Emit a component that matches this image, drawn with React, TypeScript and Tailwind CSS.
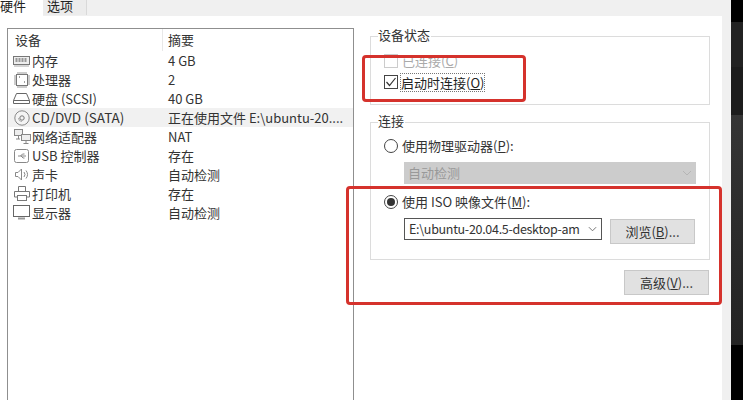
import type { ReactNode } from 'react'

const font = `"Noto Sans CJK SC", "Noto Sans", sans-serif`

const MemoryIcon = () => (
	<svg width="18" height="12" viewBox="0 0 18 12" fill="none" stroke="#777" strokeWidth="1">
		<rect x="0.5" y="1.5" width="16" height="8" fill="#eee" />
		<path d="M2.5 4h12M2.5 6h12" stroke="#999" strokeWidth="2" strokeDasharray="2 1" />
		<path d="M1 11h15" stroke="#aaa" />
	</svg>
)

const CpuIcon = () => (
	<svg width="16" height="16" viewBox="0 0 16 16" fill="none" stroke="#777" strokeWidth="1">
		<rect x="2.5" y="2.5" width="11" height="11" />
		<path d="M4 0v2M6 0v2M8 0v2M10 0v2M12 0v2M4 14v2M6 14v2M8 14v2M10 14v2M12 14v2M0 4h2M0 6h2M0 8h2M0 10h2M0 12h2M14 4h2M14 6h2M14 8h2M14 10h2M14 12h2" stroke="#999" />
		<path d="M5 5h1M10 10h1" stroke="#444" />
	</svg>
)

const DiskIcon = () => (
	<svg width="18" height="13" viewBox="0 0 18 13" fill="none" stroke="#666" strokeWidth="1">
		<path d="M3.5 1.5h10l3 7v3h-16v-3zM0.5 8.5h16" />
	</svg>
)

const CdIcon = () => (
	<svg width="16" height="16" viewBox="0 0 16 16" fill="none" stroke="#888" strokeWidth="1">
		<circle cx="8" cy="8" r="7.2" fill="#f4f4f4" />
		<circle cx="8" cy="8" r="2.2" stroke="#777" />
		<path d="M4.5 8a3.5 3.5 0 0 0 3.5 3.5" stroke="#aaa" />
	</svg>
)

const NetworkIcon = () => (
	<svg width="17" height="15" viewBox="0 0 17 15" fill="none" stroke="#888" strokeWidth="1">
		<rect x="0.5" y="0.5" width="8" height="6" fill="#eee" />
		<rect x="7.5" y="5.5" width="9" height="6" fill="#eee" />
		<path d="M4.5 7v3M2 10h4M12 12v2M9.5 14.5h5" />
	</svg>
)

const UsbIcon = () => (
	<svg width="16" height="16" viewBox="0 0 16 16" fill="none" stroke="#888" strokeWidth="1">
		<rect x="0.5" y="1.5" width="14" height="13" rx="2" />
		<path d="M4 8h8M6.5 8l2-2h2M7 8l2 2h1.5" />
	</svg>
)

const SpeakerIcon = () => (
	<svg width="15" height="13" viewBox="0 0 15 13" fill="none" stroke="#888" strokeWidth="1">
		<path d="M0.5 4.5h2.5l3.5-3.5v11l-3.5-3.5h-2.5z" />
		<path d="M9 4a4 4 0 0 1 0 5M11 2.5a6.5 6.5 0 0 1 0 8" />
	</svg>
)

const PrinterIcon = () => (
	<svg width="16" height="15" viewBox="0 0 16 15" fill="none" stroke="#777" strokeWidth="1">
		<path d="M4.5 5V0.5h7V5M3.5 11h-3V5.5h15V11h-3" />
		<rect x="3.5" y="9.5" width="9" height="5" />
	</svg>
)

const MonitorIcon = () => (
	<svg width="18" height="15" viewBox="0 0 18 15" fill="none" stroke="#666" strokeWidth="1">
		<rect x="0.5" y="0.5" width="16" height="11" />
		<path d="M5 13.5h7" strokeWidth="2" stroke="#999" />
	</svg>
)

const devices: { icon: ReactNode; name: string; summary: string; selected?: boolean }[] = [
	{ icon: <MemoryIcon />, name: '内存', summary: '4 GB' },
	{ icon: <CpuIcon />, name: '处理器', summary: '2' },
	{ icon: <DiskIcon />, name: '硬盘 (SCSI)', summary: '40 GB' },
	{ icon: <CdIcon />, name: 'CD/DVD (SATA)', summary: '正在使用文件 E:\\ubuntu-20....', selected: true },
	{ icon: <NetworkIcon />, name: '网络适配器', summary: 'NAT' },
	{ icon: <UsbIcon />, name: 'USB 控制器', summary: '存在' },
	{ icon: <SpeakerIcon />, name: '声卡', summary: '自动检测' },
	{ icon: <PrinterIcon />, name: '打印机', summary: '存在' },
	{ icon: <MonitorIcon />, name: '显示器', summary: '自动检测' },
]

const Radio = ({ checked }: { checked?: boolean }) => (
	<span className="flex size-[14px] shrink-0 items-center justify-center rounded-full border border-[#444] bg-white">
		{checked && <span className="size-[8px] rounded-full bg-[#333]" />}
	</span>
)

const Group = ({ title, className, children }: { title: string; className: string; children: ReactNode }) => (
	<div className={`relative border border-[#dcdcdc] ${className}`}>
		<span className="absolute -top-[11px] left-[7px] bg-white pr-[1px] text-[13px] leading-[18px] text-[#333]">
			{title}
		</span>
		{children}
	</div>
)

export default function App() {
	return (
		<div className="flex h-[400px] w-[743px] overflow-hidden bg-black" style={{ fontFamily: font }}>
			<div className="flex w-[731px] shrink-0 flex-col bg-[#f0f0f0]">
				<div className="flex h-[16px] shrink-0 text-[13px] leading-[12px] text-[#222]">
					<div className="h-[16px] w-[43px] overflow-hidden bg-white">硬件</div>
					<div className="h-[15px] w-[44px] overflow-hidden border-r border-[#d9d9d9] bg-[#ececec] pl-[4px]">选项</div>
				</div>
				<div className="flex min-h-0 w-[722px] flex-1 bg-white pl-[7px] pt-[12px]">
					<div className="w-[347px] shrink-0 border border-b-0 border-[#8f8f8f] text-[13px] text-[#333]">
						<div className="flex h-[22px] items-center">
							<span className="w-[154px] pl-[7px]">设备</span>
							<span className="flex h-full items-center border-l border-[#e8e8e8] pl-[5px]">摘要</span>
						</div>
						{devices.map((d) => (
							<div key={d.name} className={`flex h-[19px] items-center ${d.selected ? 'bg-[#f1f1f1]' : ''}`}>
								<span className="flex w-[24px] shrink-0 items-center justify-center pl-[4px]">{d.icon}</span>
								<span className={`w-[136px] shrink-0 whitespace-nowrap ${d.selected ? 'text-[13.5px]' : ''}`}>{d.name}</span>
								<span className="whitespace-nowrap">{d.summary}</span>
							</div>
						))}
					</div>
					<div className="ml-[16px] flex w-[340px] flex-col pt-[8px] text-[13px] text-[#333]">
						<Group title="设备状态" className="h-[69px] px-[13px] pt-[14px]">
							<div className="flex h-[20px] items-center gap-[4px] text-[#aaa]">
								<span className="size-[14px] border border-[#ccc]" />
								<span>已连接(<u>C</u>)</span>
							</div>
							<div className="flex h-[22px] items-center gap-[2px]">
								<span className="flex size-[14px] items-center justify-center border border-[#444]">
									<svg width="12" height="12" viewBox="0 0 12 12" fill="none" stroke="#333" strokeWidth="1.2">
										<path d="M1.5 6l3 3.5 6-7.5" />
									</svg>
								</span>
								<span className="border border-dotted border-[#777] leading-[17px] text-[#222]">启动时连接(<u>O</u>)</span>
							</div>
						</Group>
						<Group title="连接" className="mt-[17px] h-[138px] px-[13px] pt-[13px]">
							<div className="flex h-[20px] items-center gap-[4px]">
								<Radio />
								<span>使用物理驱动器(<u>P</u>):</span>
							</div>
							<div className="ml-[20px] mt-[6px] flex h-[22px] w-[292px] items-center justify-between bg-[#cccccc] px-[4px] text-[#999]">
								<span>自动检测</span>
								<svg width="10" height="6" viewBox="0 0 10 6" fill="none" stroke="#b5b5b5">
									<path d="M1 1l4 4 4-4" />
								</svg>
							</div>
							<div className="mt-[8px] flex h-[20px] items-center gap-[4px]">
								<Radio checked />
								<span>使用 ISO 映像文件(<u>M</u>):</span>
							</div>
							<div className="ml-[20px] mt-[6px] flex items-start gap-[8px]">
								<div className="flex h-[22px] w-[198px] items-center justify-between border border-[#555] pl-[4px] pr-[4px]">
									<span className="w-[172px] overflow-hidden whitespace-nowrap text-[12.5px] tracking-[-0.3px]">E:\ubuntu-20.04.5-desktop-am</span>
									<svg width="9" height="6" viewBox="0 0 10 6" fill="none" stroke="#666">
										<path d="M1 1l4 4 4-4" />
									</svg>
								</div>
								<button className="mt-[1px] h-[25px] w-[85px] border border-[#c8c8c8] bg-[#e1e1e1] text-[13px] text-[#333]">浏览(<u>B</u>)...</button>
							</div>
						</Group>
						<div className="mr-[1px] mt-[10px] flex justify-end">
							<button className="h-[25px] w-[85px] border border-[#c8c8c8] bg-[#e1e1e1] text-[13px] text-[#333]">高级(<u>V</u>)...</button>
						</div>
					</div>
				</div>
			</div>
			<div className="flex w-[12px] shrink-0 flex-col">
				<div className="h-[22px] bg-black" />
				<div className="h-[45px] bg-[#222222]" />
				<div className="h-[48px] bg-[#1c1c1c]" />
				<div className="h-[230px] bg-gradient-to-b from-[#353535] to-[#232323]" />
				<div className="flex-1 bg-black" />
			</div>
			<div className="pointer-events-none absolute left-[362px] top-[55px] h-[47px] w-[164px] rounded-[4px] border-[3px] border-[#d5322c]" />
			<div className="pointer-events-none absolute left-[346px] top-[186px] h-[119px] w-[376px] rounded-[4px] border-[3px] border-[#d5322c]" />
		</div>
	)
}
